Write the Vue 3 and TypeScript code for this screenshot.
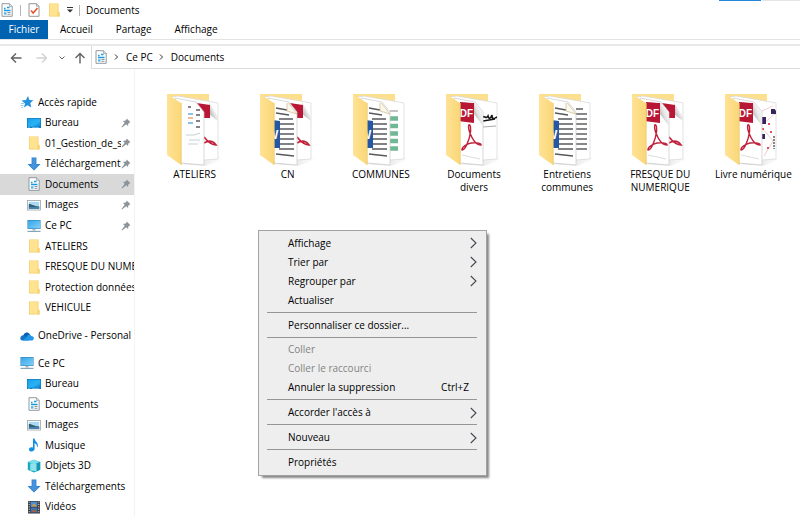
<script setup lang="ts">
interface NavItem {
  label: string
  icon: string
  pinned?: boolean
  active?: boolean
  root?: boolean
}

interface Folder {
  lines: string[]
  front: 'list' | 'word' | 'pdf'
  back: 'pdf' | 'word' | 'sheet' | 'sign' | 'art'
}

interface MenuItem {
  label: string
  submenu?: boolean
  disabled?: boolean
  shortcut?: string
}

const tabs: string[] = ['Accueil', 'Partage', 'Affichage']

const navGroups: NavItem[][] = [
  [
    { label: 'Accès rapide', icon: 'star', root: true },
    { label: 'Bureau', icon: 'desktop', pinned: true },
    { label: '01_Gestion_de_se', icon: 'folder', pinned: true },
    { label: 'Téléchargements', icon: 'download', pinned: true },
    { label: 'Documents', icon: 'doc', pinned: true, active: true },
    { label: 'Images', icon: 'image', pinned: true },
    { label: 'Ce PC', icon: 'pc', pinned: true },
    { label: 'ATELIERS', icon: 'folder' },
    { label: 'FRESQUE DU NUME', icon: 'folder' },
    { label: 'Protection données', icon: 'folder' },
    { label: 'VEHICULE', icon: 'folder' },
  ],
  [{ label: 'OneDrive - Personal', icon: 'cloud', root: true }],
  [
    { label: 'Ce PC', icon: 'pc', root: true },
    { label: 'Bureau', icon: 'desktop' },
    { label: 'Documents', icon: 'doc' },
    { label: 'Images', icon: 'image' },
    { label: 'Musique', icon: 'music' },
    { label: 'Objets 3D', icon: 'cube' },
    { label: 'Téléchargements', icon: 'download' },
    { label: 'Vidéos', icon: 'video' },
  ],
]

const folders: Folder[] = [
  { lines: ['ATELIERS'], front: 'list', back: 'pdf' },
  { lines: ['CN'], front: 'word', back: 'pdf' },
  { lines: ['COMMUNES'], front: 'word', back: 'sheet' },
  { lines: ['Documents', 'divers'], front: 'pdf', back: 'sign' },
  { lines: ['Entretiens', 'communes'], front: 'word', back: 'word' },
  { lines: ['FRESQUE DU', 'NUMERIQUE'], front: 'pdf', back: 'pdf' },
  { lines: ['Livre numérique'], front: 'pdf', back: 'art' },
]

const menuGroups: MenuItem[][] = [
  [
    { label: 'Affichage', submenu: true },
    { label: 'Trier par', submenu: true },
    { label: 'Regrouper par', submenu: true },
    { label: 'Actualiser' },
  ],
  [{ label: 'Personnaliser ce dossier...' }],
  [
    { label: 'Coller', disabled: true },
    { label: 'Coller le raccourci', disabled: true },
    { label: 'Annuler la suppression', shortcut: 'Ctrl+Z' },
  ],
  [{ label: "Accorder l'accès à", submenu: true }],
  [{ label: 'Nouveau', submenu: true }],
  [{ label: 'Propriétés' }],
]
</script>

<template>
  <div class="explorer">
    <svg class="sprite" aria-hidden="true">
      <defs>
        <linearGradient id="g-blue" x1="0" y1="0" x2="1" y2="1">
          <stop offset="0" stop-color="#18a0ea" /><stop offset="0.6" stop-color="#2bb2f5" /><stop offset="1" stop-color="#0b7fd0" />
        </linearGradient>
        <linearGradient id="g-screen" x1="0" y1="0" x2="1" y2="1">
          <stop offset="0" stop-color="#37a6e8" /><stop offset="1" stop-color="#7fd0fb" />
        </linearGradient>
        <linearGradient id="g-flap" x1="0" y1="0" x2="1" y2="0">
          <stop offset="0" stop-color="#ffe294" /><stop offset="1" stop-color="#fad778" />
        </linearGradient>
        <linearGradient id="g-shadow" x1="0" y1="0" x2="1" y2="0">
          <stop offset="0" stop-color="#000" stop-opacity="0.16" /><stop offset="1" stop-color="#000" stop-opacity="0" />
        </linearGradient>
        <linearGradient id="g-curl" x1="0" y1="1" x2="1" y2="0">
          <stop offset="0" stop-color="#8f8f8f" /><stop offset="0.5" stop-color="#e8e8e8" /><stop offset="1" stop-color="#fff" />
        </linearGradient>
        <clipPath id="clip-front"><path d="M15 9L30 10L38 20V72L15 70z" /></clipPath>
        <clipPath id="clip-back"><path d="M38 8L46 9L52 18V66H38z" /></clipPath>
      </defs>
      <symbol id="i-star" viewBox="0 0 14 14">
        <path d="M8 1L9.400 5L13.400 5.300L10.300 8L11.300 12.600L7.600 10.200L4 12.600L5 8.400L1.500 5.600L6 5z" fill="#2492dc" />
        <path d="M1 8.500H4M.5 10.500H3.500M1.500 12.500H3" stroke="#7dbdeb" stroke-width=".8" />
      </symbol>
      <symbol id="i-desktop" viewBox="0 0 14 14">
        <rect x="0" y="2" width="14" height="10" fill="#1479bd" />
        <rect x=".7" y="2.700" width="12.600" height="8" fill="url(#g-blue)" />
        <path d="M1 11.500H3M5 11.500H12" stroke="#74c8f2" stroke-width=".7" />
      </symbol>
      <symbol id="i-folder" viewBox="0 0 14 14">
        <path d="M2 .5H11.500V9L12.500 9.500V13.500H2z" fill="#f3cc60" />
        <path d="M2.500 1H10.800V12.800H2.500z" fill="#ffe391" />
        <path d="M10.800 8.500L12.500 9V13.500H10.800z" fill="#f5d270" />
      </symbol>
      <symbol id="i-download" viewBox="0 0 14 14">
        <path d="M4.600.5H9.400V7H13.500L7 13.500L.5 7H4.600z" fill="#2f7ecb" />
        <path d="M5.300 1.200H8.700V7.700H11.700L7 12.400L2.300 7.700H5.300z" fill="#4593dc" />
      </symbol>
      <symbol id="i-doc" viewBox="0 0 14 14">
        <path d="M2 .7H9.500L12.200 3.400V13.300H2z" fill="#fdfdfd" stroke="#848f96" stroke-width=".9" />
        <path d="M9.500.7V3.400H12.200" fill="#dce3e8" stroke="#848f96" stroke-width=".6" />
        <path d="M4 5.500H5.500M7 4.500H9.500M4 7.500H10.500" stroke="#199bdd" stroke-width="1.300" />
        <path d="M4 9.300H6.500V11.600H4z" fill="#4cb4e8" />
        <path d="M7.500 9.500H10.500M7.500 11.300H10.500" stroke="#737f86" stroke-width=".8" />
      </symbol>
      <symbol id="i-image" viewBox="0 0 14 14">
        <rect x=".5" y="2.500" width="13" height="9.500" fill="#fff" stroke="#9aa4aa" stroke-width=".8" />
        <path d="M1.800 3.800H12.200V10.700H1.800z" fill="#a9d9f5" />
        <path d="M1.800 6C4 5.500 6 8 12.200 8.500V10.700H1.800z" fill="#325f72" />
        <path d="M1.800 9H12.200V10.700H1.800z" fill="#4581b1" />
      </symbol>
      <symbol id="i-pc" viewBox="0 0 14 14">
        <rect x=".5" y="1" width="13" height="9" fill="#287dae" />
        <rect x="1" y="1.500" width="12" height="8" fill="url(#g-screen)" />
        <path d="M5.500 10H8.500V11.500H5.500z" fill="#a5b5bf" />
        <path d="M.5 12.400H13.500" stroke="#86a5b8" stroke-width="1.200" />
      </symbol>
      <symbol id="i-cloud" viewBox="0 0 14 14">
        <path d="M3.200 7C3.800 3.800 7.500 2 10 5.500L8 11H3z" fill="#0a5cad" />
        <path d="M.4 9.200C.4 6 3.500 5.500 5.500 7L9 11.500H2.500C1.200 11.500.4 10.500.4 9.200z" fill="#1474c9" />
        <path d="M6.500 8C7.500 5 10.300 4.700 11.200 7C13 7 14 8.200 13.800 9.500C13.600 11 12.600 11.500 11.500 11.500H3z" fill="#2296e8" />
      </symbol>
      <symbol id="i-music" viewBox="0 0 14 14">
        <path d="M6 .5H7.600C7.700 3.500 11.500 4 10.800 8.500L10 9.500C10.300 6.500 9 5.700 7.600 5.200V11C7.600 14 2 14.500 2 11.500C2 9.200 4.500 8.700 6 9.500z" fill="#168ee3" />
      </symbol>
      <symbol id="i-cube" viewBox="0 0 14 14">
        <path d="M.8 3L7 .8L13.200 3V10.800L7 13.500L.8 10.800z" fill="#17a8bf" />
        <path d="M.8 3L7 .8L13.200 3L7 5.200z" fill="#7ddfe9" />
        <path d="M9.500 4.500L13.200 3V10.800L9.500 12.500z" fill="#1795b8" />
        <path d="M3.200 4.500H9.500V12.300L3.200 11.500z" fill="#8fe2ea" />
      </symbol>
      <symbol id="i-video" viewBox="0 0 14 14">
        <rect x="1" y="1" width="12" height="12.500" fill="#39393b" />
        <path d="M2.200 1.500V13M11.800 1.500V13" stroke="#d7d7d7" stroke-width="1" stroke-dasharray="1.200 1.200" />
        <rect x="3.600" y="1.700" width="6.800" height="5" fill="#4c90d5" />
        <rect x="3.600" y="7.500" width="6.800" height="5" fill="#3774b5" />
        <path d="M4 6.500L7 3.500L10 6.500z" fill="#d7993e" /><path d="M4.500 12L7 9L10 12z" fill="#a4613b" />
      </symbol>
      <symbol id="i-pin" viewBox="0 0 10 10">
        <path d="M5.800.6L9.400 4.200L8.300 4.700L7.400 5.400L7 8L5.200 6.300L1 9.500L.5 9L3.700 4.800L2 3L4.600 2.600L5.400 1.700z" fill="#8b949a" />
      </symbol>
      <symbol id="i-check" viewBox="0 0 14 14">
        <path d="M2 .7H9.500L12 3.200V13.300H2z" fill="#fff" stroke="#8b8b8b" stroke-width=".9" />
        <path d="M9.500.7V3.200H12" fill="none" stroke="#8b8b8b" stroke-width=".7" />
        <path d="M4 7.500L6.200 10L10.500 5" fill="none" stroke="#e4572e" stroke-width="1.600" />
      </symbol>
      <symbol id="f-acrobat" viewBox="0 0 22 30">
        <path d="M8.500 1.500C7 4 9 10 11.500 15C14 20 18 23 21 23C21.500 20.500 13 19.500 7 22C3 24 .8 26 1 28C4.500 28.500 9 17 10 9C10.200 4 9.800 1.500 8.500 1.500z" fill="none" stroke="#c0203a" stroke-width="1.500" />
      </symbol>
    </svg>

    <header class="titlebar">
      <div class="quick">
        <svg class="icon"><use href="#i-doc" /></svg>
        <span class="bar"></span>
        <button type="button" aria-label="Propriétés"><svg class="icon"><use href="#i-check" /></svg></button>
        <button type="button" aria-label="Nouveau dossier"><svg class="icon"><use href="#i-folder" /></svg></button>
        <button type="button" class="more" aria-label="Personnaliser">
          <svg viewBox="0 0 6 6"><path d="M0 .5H6" stroke="#333" /><path d="M0 2.500H6L3 5.500z" fill="#333" /></svg>
        </button>
        <span class="bar"></span>
      </div>
      <h1>Documents</h1>
      <div class="edge"><span class="accent"></span><span class="rest"></span></div>
    </header>

    <nav class="tabs" aria-label="Ruban">
      <button type="button" class="file">Fichier</button>
      <button v-for="tab in tabs" :key="tab" type="button">{{ tab }}</button>
    </nav>

    <div class="address">
      <div class="history">
        <button type="button" aria-label="Précédent"><svg class="arrow" viewBox="0 0 12 12"><path d="M11.500 6H1.500M6 1.500L1.500 6L6 10.500" stroke="#606060" /></svg></button>
        <button type="button" aria-label="Suivant" disabled><svg class="arrow" viewBox="0 0 12 12"><path d="M.5 6H10.500M6 1.500L10.500 6L6 10.500" stroke="#d2d2d2" /></svg></button>
        <button type="button" aria-label="Récents"><svg class="tiny" viewBox="0 0 6 6"><path d="M.5 1.500L3 4L5.500 1.500" stroke="#666" /></svg></button>
        <button type="button" aria-label="Monter"><svg class="arrow" viewBox="0 0 12 12"><path d="M6 11.500V1.500M1.500 6L6 1.500L10.500 6" stroke="#606060" /></svg></button>
      </div>
      <nav class="crumbs" aria-label="Chemin">
        <svg class="icon"><use href="#i-doc" /></svg>
        <svg class="tiny" viewBox="0 0 6 6"><path d="M1 .5L3.500 3L1 5.500" stroke="#333" /></svg>
        <a href="#">Ce PC</a>
        <svg class="tiny" viewBox="0 0 6 6"><path d="M1 .5L3.500 3L1 5.500" stroke="#333" /></svg>
        <a href="#">Documents</a>
      </nav>
    </div>

    <div class="body">
      <nav class="sidebar" aria-label="Volet de navigation">
        <ul v-for="(group, g) in navGroups" :key="g" :class="'group' + g">
          <li v-for="item in group" :key="item.label">
            <a href="#" :class="{ root: item.root, active: item.active }">
              <svg class="icon"><use :href="'#i-' + item.icon" /></svg>
              <span class="name">{{ item.label }}</span>
              <svg v-if="item.pinned" class="pin"><use href="#i-pin" /></svg>
            </a>
          </li>
        </ul>
      </nav>

      <main class="files">
        <a v-for="folder in folders" :key="folder.lines[0]" href="#" class="folder">
          <svg class="thumb" viewBox="0 0 58 75" aria-hidden="true">
            <path d="M38 58L57 66L39 73L16 71z" fill="url(#g-shadow)" />
            <path d="M1 1H43V60H1z" fill="#fde08e" />
            <path d="M5 4L12 3L47 9L52 10V66L38 67L12 40z" fill="#fff" stroke="#d5d5d5" stroke-width=".7" />
            <g clip-path="url(#clip-back)">
              <template v-if="folder.back === 'pdf'">
                <path d="M43 9L52 24V28L43 21z" fill="url(#g-curl)" />
                <path d="M38 44C42 49 46 52 50 52C47 48 43 47 38 50" fill="none" stroke="#c0203a" stroke-width="1.700" />
              </template>
              <template v-else-if="folder.back === 'word'">
                <path d="M38 16H45M38 21H49M38 26H49M38 31H49M38 36H49M38 41H49M38 46H49M38 51H49M38 56H49" stroke="#5e6064" stroke-width="1.400" />
              </template>
              <template v-else-if="folder.back === 'sheet'">
                <path d="M38 18H46" stroke="#888" />
                <path d="M37 25.500H46M37 33H46M37 40.500H46M37 48H46M37 55.500H46" stroke="#70b894" stroke-width="4.500" />
              </template>
              <template v-else-if="folder.back === 'sign'">
                <path d="M37 25C39 21 41 27 43 23C44 27 46 25 47 22C47 28 50 25 52 24M38 28L50 26" fill="none" stroke="#161616" stroke-width="1.600" />
                <path d="M38 34L51 33" stroke="#aaa" />
              </template>
              <template v-else>
                <path d="M38 18L51 12M39 31L52 20M39 36L49 48L40 63" fill="none" stroke="#f3ccca" />
                <path d="M38 24H42V31H38zM47 16H52V21H47zM38 41H41V46H38z" fill="#36245a" />
                <path d="M44 30H46V32H44zM38 35H40V37H38zM46 38H48V40H46zM43 54H45V56H43z" fill="#e34e60" />
                <path d="M50 43V56" stroke="#555" stroke-width="1.400" stroke-dasharray="2 1" />
              </template>
            </g>
            <path v-if="folder.back === 'pdf'" d="M24 9L44 12V25H24z" fill="#ba1736" />
            <path d="M9 5L30 9L38 19V72L15 70z" fill="#fff" stroke="#c9c9c9" stroke-width=".7" />
            <g clip-path="url(#clip-front)">
              <template v-if="folder.front === 'list'">
                <path d="M22 14H25M30 17H34M30 22H34M30 28H34M30 34H34" stroke="#5c5c5c" stroke-width="1.500" />
                <path d="M22 21H27M22 30H27" stroke="#8cc2e4" stroke-width="2" />
                <path d="M22 25H27" stroke="#efbd92" stroke-width="2" />
                <path d="M20 42H28L34 40M23 47H34M22 51H32" fill="none" stroke="#b8c8cc" stroke-width=".8" />
              </template>
              <template v-else-if="folder.front === 'word'">
                <path d="M17 15L28 17M17 20L30 22M20 26H34M20 31H35M20 36H35M20 41H35M20 46H35M20 51H35M20 56H35M17 61L35 63" stroke="#57595d" stroke-width="1.400" />
                <path d="M14 27L21 28V55L14 55z" fill="#2458a4" />
                <text x="8" y="46" class="word">W</text>
                <path d="M28 8V18L38 21z" fill="#faf7ed" stroke="#ccb989" stroke-width=".7" />
              </template>
              <template v-else>
                <path d="M14 8L29 10V30L14 28z" fill="#b81635" />
                <text x="8" y="24" class="pdf">PDF</text>
                <path d="M29 9L38 21V33L29 21z" fill="url(#g-curl)" />
                <use href="#f-acrobat" x="16" y="30" width="21" height="29" />
                <path d="M17 62L35 66" stroke="#ddd" />
              </template>
            </g>
            <path d="M1 1L15 10V72L1 62z" fill="url(#g-flap)" />
            <path d="M15.300 10V72" stroke="#eccb73" stroke-width=".8" />
          </svg>
          <span v-for="line in folder.lines" :key="line" class="label">{{ line }}</span>
        </a>

        <div class="menu" role="menu">
          <div v-for="(group, g) in menuGroups" :key="g" class="section" role="group">
            <button v-for="item in group" :key="item.label" type="button" role="menuitem" :disabled="item.disabled">
              <span>{{ item.label }}</span>
              <kbd v-if="item.shortcut">{{ item.shortcut }}</kbd>
              <svg v-if="item.submenu" class="chevron" viewBox="0 0 7 12"><path d="M.8 1L6 6L.8 11" /></svg>
            </button>
          </div>
        </div>
      </main>
    </div>
  </div>
</template>

<style>
body {
  margin: 0;
  background: #fff;
  overflow: hidden;
}
</style>

<style scoped>
.explorer {
  display: flex;
  flex-direction: column;
  height: 100vh;
  overflow: hidden;
  font: 10px/13px "Open Sans", "Noto Sans", sans-serif;
  color: #000;
}
.sprite {
  position: absolute;
  width: 0;
  height: 0;
}
button {
  display: flex;
  align-items: center;
  padding: 0;
  border: 0;
  background: none;
  font: inherit;
  color: inherit;
}
a {
  color: inherit;
  text-decoration: none;
}
ul {
  margin: 0;
  padding: 0;
  list-style: none;
}
svg {
  display: block;
  flex: none;
}
.icon {
  width: 14px;
  height: 14px;
}
.titlebar {
  display: flex;
  align-items: center;
  height: 20px;
}
.quick {
  display: flex;
  align-items: center;
  gap: 6px;
}
.bar {
  width: 1px;
  height: 11px;
  background: #b5b5b5;
}
.more svg {
  width: 6px;
  height: 6px;
}
h1 {
  margin: 0 0 0 6px;
  font: inherit;
}
.edge {
  display: flex;
  gap: 1px;
  align-self: flex-start;
  margin-left: auto;
}
.accent {
  width: 42px;
  height: 1px;
  background: #2485d8;
}
.rest {
  width: 38px;
  height: 1px;
  background: #e4e4e4;
}
.tabs {
  display: flex;
  gap: 23px;
  height: 19px;
  border-bottom: 1px solid #e3e3e3;
}
.tabs .file {
  width: 48px;
  margin-right: -11px;
  justify-content: center;
  background: #0063b1;
  color: #fff;
}
.address {
  display: flex;
  margin-top: 4px;
  border-top: 2px solid #e9e9e9;
}
.history {
  display: flex;
  align-items: center;
  box-sizing: border-box;
  width: 91px;
  padding-left: 10px;
  gap: 14px;
}
.history button:nth-child(3) {
  margin: 0 -5px 0 -3px;
}
.arrow {
  width: 12px;
  height: 12px;
}
.arrow path {
  fill: none;
  stroke-width: 1.4;
}
.tiny {
  width: 6px;
  height: 6px;
}
.tiny path {
  fill: none;
}
.crumbs {
  display: flex;
  flex: 1;
  align-items: center;
  gap: 6px;
  height: 22px;
  padding-left: 2px;
  border: 1px solid #dcdcdc;
  border-top: 0;
  border-right: 0;
}
.body {
  display: flex;
  flex: 1;
  min-height: 0;
}
.sidebar {
  width: 134px;
  padding-top: 23px;
  border-right: 1px solid #f3f3f3;
  overflow: hidden;
}
.sidebar ul {
  display: grid;
  grid-auto-rows: 1fr;
}
.sidebar .group0 {
  height: 226px;
}
.sidebar .group1 {
  height: 21px;
  margin: 7px 0;
}
.sidebar .group2 {
  height: 164px;
}
.sidebar li {
  display: grid;
  min-width: 0;
}
.sidebar a {
  display: flex;
  align-items: center;
  gap: 4px;
  min-width: 0;
  padding-left: 27px;
}
.sidebar a.root {
  padding-left: 20px;
}
.sidebar a.active {
  background: #d9d9d9;
}
.name {
  flex: 1;
  overflow: hidden;
  white-space: nowrap;
}
.pin {
  width: 10px;
  height: 10px;
  margin: 0 3px 0 -4px;
}
.files {
  position: relative;
  display: grid;
  flex: 1;
  grid-template-columns: repeat(7, 1fr);
  align-items: start;
  padding: 24px 0 0 13px;
}
.folder {
  display: flex;
  flex-direction: column;
  align-items: center;
}
.thumb {
  width: 58px;
  height: 75px;
}
.label {
  white-space: nowrap;
}
.word {
  font: bold 12px "Liberation Sans", sans-serif;
  fill: #fff;
}
.pdf {
  font: bold 10px "Liberation Sans", sans-serif;
  fill: #fff;
}
.menu {
  position: absolute;
  left: 123px;
  top: 161px;
  display: flex;
  flex-direction: column;
  box-sizing: border-box;
  width: 229px;
  height: 246px;
  padding: 3px 9px 3px 8px;
  border: 1px solid #a2a2a2;
  background: #eee;
  box-shadow: 3px 3px 2px -1px #888;
}
.section {
  display: contents;
}
.section + .section::before {
  content: "";
  height: 1px;
  margin: 2px 0 3px;
  background: #969696;
}
.menu button {
  flex: 1;
  padding-left: 21px;
}
.menu button:disabled {
  color: #838383;
}
.menu kbd {
  margin: 0 8px 0 auto;
  font: inherit;
}
.chevron {
  width: 7px;
  height: 12px;
  margin-left: auto;
}
.chevron path {
  fill: none;
  stroke: #4b4650;
  stroke-width: 1.1;
}
</style>
